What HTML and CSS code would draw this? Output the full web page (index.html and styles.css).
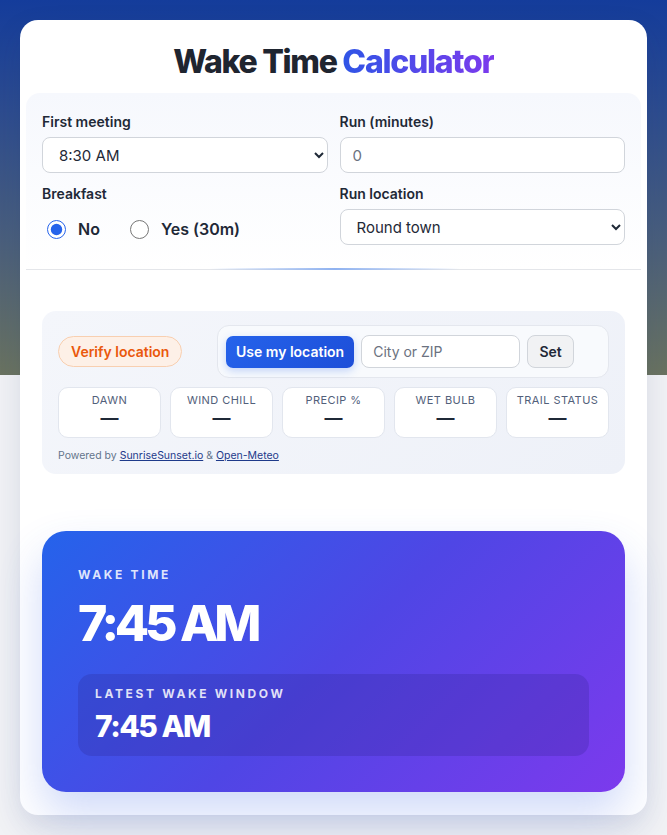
FILE: index.html
```html
<!DOCTYPE html>
<html lang="en">
<head>
  <meta charset="UTF-8" />
  <meta name="viewport" content="width=device-width, initial-scale=1.0"/>
  <title>Wake Time Calculator</title>
  <link rel="stylesheet" href="styles.css">
</head>
<body>
  <main class="card">
    <h1>Wake Time <span class="accent">Calculator</span></h1>

    <section class="form-panel">
      <div class="field">
        <label for="meeting">First meeting</label>
        <select id="meeting">
          <option>8:30 AM</option>
        </select>
      </div>
      <div class="field">
        <label for="run">Run (minutes)</label>
        <input id="run" type="number" placeholder="0">
      </div>
      <div class="field">
        <label>Breakfast</label>
        <div class="radios">
          <label class="radio"><input type="radio" name="bf" checked> No</label>
          <label class="radio"><input type="radio" name="bf"> Yes (30m)</label>
        </div>
      </div>
      <div class="field">
        <label for="loc">Run location</label>
        <select id="loc">
          <option>Round town</option>
        </select>
      </div>
    </section>

    <section class="loc-panel">
      <div class="loc-row">
        <button class="verify">Verify location</button>
        <div class="loc-group">
          <button class="use-loc">Use my location</button>
          <input type="text" placeholder="City or ZIP">
          <button class="set">Set</button>
        </div>
      </div>
      <div class="stats">
        <div class="stat"><span class="stat-label">Dawn</span><span class="stat-value">—</span></div>
        <div class="stat"><span class="stat-label">Wind chill</span><span class="stat-value">—</span></div>
        <div class="stat"><span class="stat-label">Precip %</span><span class="stat-value">—</span></div>
        <div class="stat"><span class="stat-label">Wet bulb</span><span class="stat-value">—</span></div>
        <div class="stat"><span class="stat-label">Trail status</span><span class="stat-value">—</span></div>
      </div>
      <p class="powered">Powered by <a href="#">SunriseSunset.io</a> &amp; <a href="#">Open-Meteo</a></p>
    </section>

    <section class="result">
      <div class="result-label">Wake time</div>
      <div class="result-time">7:45 AM</div>
      <div class="window">
        <div class="result-label">Latest wake window</div>
        <div class="window-time">7:45 AM</div>
      </div>
    </section>
  </main>
</body>
</html>
```

FILE: styles.css
```css
* {
  box-sizing: border-box;
}

body {
  margin: 0;
  padding: 20px;
  font-family: Inter, "Noto Sans", sans-serif;
  color: #1f2937;
  background:
    linear-gradient(to bottom, #143c9b 0, #2d4c8f 110px, #4a5f7c 240px, #6a7360 375px, transparent 375px),
    #f1f2f5;
}

.card {
  background: #fff;
  border-radius: 18px;
  padding: 23px 22px 23px;
  box-shadow: 0 12px 30px rgba(30, 50, 110, 0.12);
}

h1 {
  margin: 0 0 12px;
  text-align: center;
  font-size: 32px;
  line-height: 38px;
  font-weight: 800;
  letter-spacing: -0.04em;
  color: #1f2530;
}

.accent {
  background: linear-gradient(90deg, #2f55e6, #7c3aed);
  -webkit-background-clip: text;
  background-clip: text;
  color: transparent;
}

/* form */
.form-panel {
  position: relative;
  margin: 0 -16px;
  padding: 20px 16px 24px;
  display: grid;
  grid-template-columns: 1fr 1fr;
  column-gap: 12px;
  row-gap: 12px;
  border-radius: 14px 14px 0 0;
  background: linear-gradient(to bottom, #f6f8fd, #fff);
  border-bottom: 1px solid #e4e6ea;
}

.form-panel::after {
  content: "";
  position: absolute;
  left: 50%;
  bottom: -1px;
  width: 250px;
  height: 2px;
  margin-left: -124px;
  background: linear-gradient(90deg, rgba(147, 180, 240, 0), #8fb2f0, rgba(147, 180, 240, 0));
}

.field > label {
  display: block;
  font-size: 14px;
  line-height: 18px;
  font-weight: 600;
  margin-bottom: 6px;
  color: #1f2937;
}

.field select,
.field input[type="number"] {
  width: 100%;
  height: 36px;
  padding: 0 12px;
  font: 15px Inter, sans-serif;
  color: #1f2937;
  background: #fff;
  border: 1px solid #d1d5db;
  border-radius: 8px;
}

.field input::placeholder {
  color: #6b7280;
}

.radios {
  display: flex;
  gap: 30px;
  padding: 10px 0 0 5px;
}

.radio {
  display: flex;
  align-items: center;
  gap: 12px;
  font-size: 16px;
  font-weight: 600;
  color: #1f2937;
}

.radio input {
  width: 19px;
  height: 19px;
  margin: 0;
  accent-color: #2563eb;
}

/* location */
.loc-panel {
  margin-top: 41px;
  padding: 14px 16px 12px;
  border-radius: 14px;
  background: linear-gradient(135deg, #f4f6fb, #eef1f8);
}

.loc-row {
  display: flex;
  align-items: center;
}

.verify {
  height: 31px;
  padding: 0 12px;
  font: 600 14px Inter, sans-serif;
  color: #ea580c;
  background: #fdf0e7;
  border: 1.5px solid #f8cfb0;
  border-radius: 999px;
}

.loc-group {
  margin-left: auto;
  width: 392px;
  display: flex;
  align-items: center;
  gap: 7px;
  padding: 9px 8px;
  background: #f8fafd;
  border: 1px solid #e4e7ee;
  border-radius: 12px;
}

.use-loc {
  height: 32px;
  padding: 0 10px;
  font: 600 14px Inter, sans-serif;
  color: #fff;
  background: linear-gradient(135deg, #2563eb, #1d4ed8);
  border: 0;
  border-radius: 7px;
  box-shadow: 0 3px 8px rgba(37, 99, 235, 0.25);
}

.loc-group input {
  width: 159px;
  height: 33px;
  padding: 0 11px;
  font: 14px Inter, sans-serif;
  border: 1px solid #d1d5db;
  border-radius: 8px;
  background: #fff;
}

.loc-group input::placeholder {
  color: #6b7280;
}

.set {
  height: 33px;
  width: 47px;
  font: 600 14px Inter, sans-serif;
  color: #1f2937;
  background: #f1f2f4;
  border: 1px solid #d1d5db;
  border-radius: 8px;
}

.stats {
  margin-top: 9px;
  display: grid;
  grid-template-columns: repeat(5, 1fr);
  gap: 9px;
}

.stat {
  height: 51px;
  display: flex;
  flex-direction: column;
  align-items: center;
  padding-top: 6px;
  background: #fff;
  border: 1px solid #e2e6ee;
  border-radius: 10px;
}

.stat-label {
  font-size: 11px;
  line-height: 13px;
  letter-spacing: 0.04em;
  text-transform: uppercase;
  color: #52607a;
}

.stat-value {
  font-size: 18px;
  line-height: 22px;
  font-weight: 700;
  color: #1f2937;
}

.powered {
  margin: 11px 0 0;
  font-size: 10.5px;
  color: #64748b;
}

.powered a {
  color: #1e3a8a;
}

/* result */
.result {
  margin-top: 57px;
  padding: 36px 36px 36px;
  border-radius: 24px;
  color: #fff;
  background: linear-gradient(135deg, #2563eb 0%, #4f46e5 50%, #7c3aed 100%);
  box-shadow: 0 22px 44px rgba(59, 100, 230, 0.24);
}

.result-label {
  font-size: 12px;
  line-height: 16px;
  font-weight: 700;
  letter-spacing: 0.22em;
  text-transform: uppercase;
  color: rgba(255, 255, 255, 0.85);
}

.result-time {
  margin-top: 15px;
  font-size: 50px;
  line-height: 50px;
  font-weight: 800;
  letter-spacing: -0.085em;
}

.window {
  margin-top: 26px;
  padding: 12px 17px 12px;
  border-radius: 14px;
  background: rgba(40, 30, 130, 0.22);
}

.window-time {
  margin-top: 6px;
  font-size: 30px;
  line-height: 36px;
  font-weight: 800;
  letter-spacing: -0.05em;
}
```
